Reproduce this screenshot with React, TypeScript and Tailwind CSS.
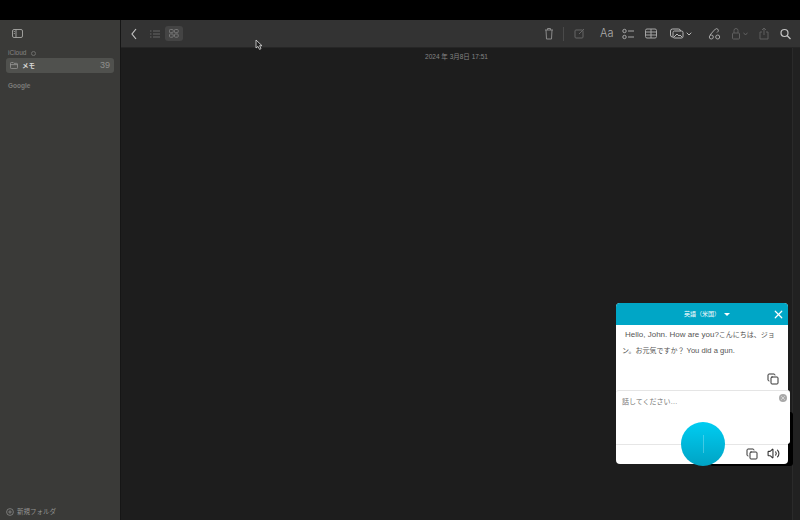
import { Copy, Volume2, X } from "lucide-react";

const jp = "font-['Liberation_Sans','Noto_Sans_CJK_JP',sans-serif]";

function Icon({ children, className = "", w = 16 }: { children: React.ReactNode; className?: string; w?: number }) {
  return (
    <svg width={w} height="16" viewBox={`0 0 ${w} 16`} fill="none" stroke="currentColor" strokeWidth="1" className={className}>
      {children}
    </svg>
  );
}

function Sidebar() {
  return (
    <aside className="w-[121px] shrink-0 bg-[#3a3a38] border-r border-[#161616] flex flex-col">
      <div className="h-[27px] pl-[12px] flex items-center text-[#a8a8a6]">
        <svg width="11" height="9" viewBox="0 0 11 9" fill="none" stroke="currentColor" strokeWidth="0.9">
          <rect x="0.5" y="0.5" width="10" height="8" rx="1.500" />
          <path d="M4 .5v8M1.800 2.500h1M1.800 4.500h1" />
        </svg>
      </div>
      <div className="mt-[1px] pl-2 h-[10px] flex items-center gap-[5px] text-[6.5px] text-[#858583]">
        iCloud
        <span className="w-[5px] h-[5px] rounded-full border border-[#6d6d6b]" />
      </div>
      <div className="mx-[6px] mt-0 h-[15px] rounded-[3px] bg-[#50514e] flex items-center pl-[4px] pr-[4px]">
        <svg width="8" height="7" viewBox="0 0 9 8" fill="none" stroke="#a4a4a2" strokeWidth="0.8">
          <path d="M.5 1.500a1 1 0 0 1 1-1h2l1 1h3a1 1 0 0 1 1 1v4a1 1 0 0 1-1 1h-6a1 1 0 0 1-1-1z" />
          <path d="M.5 3h8" />
        </svg>
        <span className="ml-[4px] text-[#d8d8d6] text-[6.5px] font-semibold">メモ</span>
        <span className="ml-auto text-[#8f8f8d] text-[9px]">39</span>
      </div>
      <div className="mt-[8px] pl-2 text-[6.5px] leading-[10px] text-[#7b7a78] font-semibold">Google</div>
      <div className="mt-auto h-[16px] pl-[6px] flex items-center gap-[3px] text-[6.5px] text-[#949492]">
        <svg width="8" height="8" viewBox="0 0 8 8" fill="none" stroke="currentColor" strokeWidth="0.7">
          <circle cx="4" cy="4" r="3.400" />
          <path d="M4 2.200v3.600M2.200 4h3.600" />
        </svg>
        新規フォルダ
      </div>
    </aside>
  );
}

function Toolbar() {
  return (
    <header className="h-[28px] shrink-0 bg-[#333333] border-b border-[#262626] flex items-center text-[#a9a9a9]">
      <svg width="6" height="12" viewBox="0 0 6 12" fill="none" stroke="#c4c4c4" strokeWidth="1.200" className="ml-[10px]">
        <path d="M5 1 1 6l4 5" />
      </svg>
      <svg width="10" height="8" viewBox="0 0 10 8" fill="none" stroke="#666" strokeWidth="1" className="ml-[13px]">
        <path d="M0 1h1.500M3 1h7M0 4h1.500M3 4h7M0 7h1.500M3 7h7" />
      </svg>
      <div className="ml-[5px] w-[18px] h-[15px] rounded-[3px] bg-[#444] flex items-center justify-center">
        <svg width="10" height="9" viewBox="0 0 10 9" fill="none" stroke="#7d7d7d" strokeWidth="0.9">
          <rect x=".5" y=".5" width="3.700" height="3.200" rx=".8" />
          <rect x="5.500" y=".5" width="3.700" height="3.200" rx=".8" />
          <rect x=".5" y="5" width="3.700" height="3.200" rx=".8" />
          <rect x="5.500" y="5" width="3.700" height="3.200" rx=".8" />
        </svg>
      </div>

      <div className="ml-auto flex items-center pr-[9px]">
        <Icon className="text-[#8a8a8a]" w={12}>
          <path d="M2 4h8M4.500 4V2.500h3V4M3 4l.5 9h5L9 4" />
        </Icon>
        <div className="ml-[8px] w-px h-[14px] bg-[#4a4a4a]" />
        <Icon className="ml-[9px] text-[#666]" w={12}>
          <rect x="2" y="4" width="8" height="8" rx="1" />
          <path d="M6 8l5-5" />
        </Icon>
        <span className="ml-[15px] w-[13px] text-[11px] leading-none text-[#adadad] font-['Inter',sans-serif] font-light">Aa</span>
        <Icon className="ml-[9px] text-[#a8a8a8]" w={12}>
          <circle cx="2.500" cy="5" r="1.700" />
          <circle cx="2.500" cy="11" r="1.700" />
          <path d="M6 5h6M6 11h6" />
        </Icon>
        <Icon className="ml-[11px] text-[#a5a5a5]" w={12}>
          <rect x=".5" y="3" width="11" height="9" rx="1.500" />
          <path d="M.5 6h11M.5 9h11M6 3v9" />
        </Icon>
        <Icon className="ml-[13px] text-[#b5b5b5]" w={14}>
          <rect x=".5" y="3" width="10" height="8" rx="2" />
          <rect x="3" y="5" width="10" height="7" rx="1.500" fill="#333" />
          <path d="M4 11l3-3 2 2 1-1 2 2" />
        </Icon>
        <svg width="6" height="4" viewBox="0 0 6 4" fill="none" stroke="#bbb" strokeWidth="1" className="ml-[2px]">
          <path d="M.7 .7 3 3l2.300-2.300" />
        </svg>
        <Icon className="ml-[16px] text-[#a8a8a8]" w={13}>
          <path d="M5.500 5l2-2a1.800 1.800 0 0 1 2.500 2.500l-1 1M5.500 5 2 9" />
          <circle cx="3.300" cy="11" r="2" />
          <circle cx="9.700" cy="11" r="2" />
        </Icon>
        <Icon className="ml-[11px] text-[#5f5f5f]" w={8}>
          <rect x=".5" y="7" width="7" height="6" rx="1" />
          <path d="M2 7V4.500a2 2 0 0 1 4 0V7" />
        </Icon>
        <svg width="5" height="4" viewBox="0 0 5 4" fill="none" stroke="#666" strokeWidth="0.9" className="ml-[3px]">
          <path d="M.5 .7 2.500 3l2-2.300" />
        </svg>
        <Icon className="ml-[11px] text-[#5f5f5f]" w={10}>
          <path d="M3 6H1v7h8V6H7M5 9V2M3 4l2-2 2 2" />
        </Icon>
        <Icon className="ml-[11px] text-[#c4c4c4]" w={11}>
          <circle cx="4.500" cy="7" r="3.500" strokeWidth="1.200" />
          <path d="M7 9.500 10.500 13" strokeWidth="1.200" />
        </Icon>
      </div>
    </header>
  );
}

function Translator() {
  return (
    <div className={`absolute left-[616px] top-[303px] w-[174px] ${jp}`}>
      <div className="absolute left-[94px] right-[-3px] top-[109px] bottom-[-2px] bg-black rounded-[3px]" />
      <div className="relative w-[172px] h-[161px] rounded-[4px] bg-white flex flex-col overflow-hidden">
        <div className="h-[22px] shrink-0 bg-[#00a6c6] flex items-center text-white text-[6px] relative pl-[68px]">
          <span>英語（米国）</span>
          <span className="ml-[4px] w-0 h-0 border-x-[3px] border-x-transparent border-t-[3px] border-t-white" />
          <X size={13} strokeWidth={2.200} className="absolute right-[3px] top-[5px]" />
        </div>
        <div className="pl-[6px] pr-[10px] pt-[2px] text-[7px] leading-[16px] text-[#555]">
          <p className="indent-[3px]">
            <span className="text-[8px]">Hello, John. How are you?</span>こんにちは、ジョ<br />
            ン。お元気ですか？ <span className="text-[7.6px]">You did a gun.</span>
          </p>
        </div>
        <div className="mt-[14px] flex justify-end pr-[9px] text-[#333]">
          <Copy size={12} />
        </div>
      </div>

      {/* input card sits over the lower half */}
      <div className="absolute left-0 right-0 top-[87px] h-[74px] flex flex-col">
        <div className="h-[54px] w-[174px] bg-white rounded-[3px] border-t border-[#e5e5e5] pl-[6px] pt-[6px] text-[7px] leading-[10px] text-[#777]">
          話してください…
        </div>
        <div className="w-[172px] flex-1 border-t border-[#e6e6e6] flex items-center justify-end pr-[8px] pb-[2px] gap-[9px] text-[#333]">
          <Copy size={12} />
          <Volume2 size={13} />
        </div>
        <div className="absolute right-[3px] top-[4px] w-[8px] h-[8px] rounded-full bg-[#a9a9a9] flex items-center justify-center">
          <X size={6} strokeWidth={2} className="text-white" />
        </div>
        <div className="absolute left-[65px] top-[32px] w-[44px] h-[44px] rounded-full bg-gradient-to-b from-[#00cdf2] to-[#00a3c4] flex items-center justify-center">
          <div className="w-px h-[18px] bg-white/25" />
        </div>
      </div>
    </div>
  );
}

export default function App() {
  return (
    <div className={`relative w-[800px] h-[520px] bg-black overflow-hidden flex flex-col ${jp}`}>
      <div className="h-[20px] shrink-0 bg-black" />
      <div className="flex-1 flex min-h-0">
        <Sidebar />
        <main className="flex-1 flex flex-col bg-[#1d1d1d]">
          <Toolbar />
          <div className="flex-1 flex">
            <div className="flex-1 pt-[3px] text-center text-[6.5px] leading-[12px] text-[#858585]">
              2024 年 3月8日 17:51
            </div>
            <div className="w-[8px] bg-[#212121] border-l border-[#2a2a2a]" />
          </div>
        </main>
      </div>
      <Translator />
      <svg width="9" height="12" viewBox="0 0 9 12" className="absolute left-[255px] top-[39px]">
        <path d="M1 1v8l2-1.600 1.500 3 1.500-.7-1.400-3H7z" fill="#222" stroke="#ddd" strokeWidth="0.8" />
      </svg>
    </div>
  );
}
